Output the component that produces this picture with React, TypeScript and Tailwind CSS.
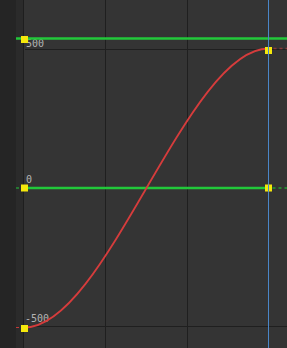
import React from "react";

const W = 287;
const H = 348;
const X0 = 24.5;
const X1 = 268.5;
const Y_TOP = 48.5;
const Y_MID = 188;
const Y_BOT = 327.5;

const Key = ({ x, y, split }: { x: number; y: number; split?: boolean }) => (
  <g>
    <rect x={x - 3.5} y={y - 3.5} width={7} height={7} fill="#f5e80c" />
    {split && <rect x={x - 0.5} y={y - 3.5} width={1} height={7} fill="#4a86c8" />}
  </g>
);

const Label = ({ x, y, text }: { x: number; y: number; text: string }) => (
  <text
    x={x}
    y={y}
    fill="#b4b4b4"
    fontSize="10"
    fontFamily="'DejaVu Sans Mono', 'Liberation Mono', monospace"
  >
    {text}
  </text>
);

export default function App() {
  const third = (X1 - X0) / 3;
  const curve = `M ${X0} ${Y_BOT} C ${X0 + third} ${Y_BOT}, ${X1 - third} ${Y_TOP}, ${X1} ${Y_TOP}`;

  return (
    <div className="relative w-[287px] h-[348px] overflow-hidden bg-[#343434]">
      <div className="flex h-full">
        <div className="w-[16px] h-full bg-[#252525]" />
        <div className="w-[8px] h-full bg-[#2b2b2b] border-r border-[#1e1e1e]" />
        <div className="flex-1 h-full bg-[#343434]" />
      </div>

      <svg
        className="absolute inset-0"
        width={W}
        height={H}
        viewBox={`0 0 ${W} ${H}`}
      >
        {/* grid */}
        <line x1={105.5} y1={0} x2={105.5} y2={H} stroke="#1f1f1f" strokeWidth={1} />
        <line x1={187.5} y1={0} x2={187.5} y2={H} stroke="#1f1f1f" strokeWidth={1} />
        <line x1={25} y1={49.5} x2={W} y2={49.5} stroke="#1f1f1f" strokeWidth={1} />
        <line x1={25} y1={326.5} x2={W} y2={326.5} stroke="#1f1f1f" strokeWidth={1} />

        {/* labels */}
        <Label x={26} y={47} text="500" />
        <Label x={26} y={183} text="0" />
        <Label x={25} y={322} text="-500" />

        {/* green lines */}
        <line x1={16} y1={38.5} x2={W} y2={38.5} stroke="#22c83a" strokeWidth={2.5} />
        <line x1={24} y1={Y_MID} x2={X1} y2={Y_MID} stroke="#22c83a" strokeWidth={2.5} />
        <line x1={16} y1={Y_MID} x2={21} y2={Y_MID} stroke="#22c83a" strokeWidth={1} strokeDasharray="3 3" />
        <line x1={X1 + 4} y1={Y_MID} x2={W} y2={Y_MID} stroke="#22a030" strokeWidth={1.5} strokeDasharray="3 3" />

        {/* red curve */}
        <path d={curve} fill="none" stroke="#d63c3c" strokeWidth={1.8} />
        <line x1={16} y1={Y_BOT} x2={21} y2={Y_BOT} stroke="#c23838" strokeWidth={1} strokeDasharray="3 3" />
        <line x1={X1 + 5} y1={Y_TOP} x2={W} y2={Y_TOP} stroke="#8a3a3a" strokeWidth={1.5} strokeDasharray="3 3" />

        {/* playhead */}
        <line x1={268.5} y1={0} x2={268.5} y2={H} stroke="#4a86c8" strokeWidth={1} />

        {/* keys */}
        <Key x={24.5} y={39.5} />
        <Key x={24.5} y={Y_MID} />
        <Key x={24.5} y={328.5} />
        <Key x={268.5} y={50.5} split />
        <Key x={268.5} y={Y_MID} split />
      </svg>
    </div>
  );
}
